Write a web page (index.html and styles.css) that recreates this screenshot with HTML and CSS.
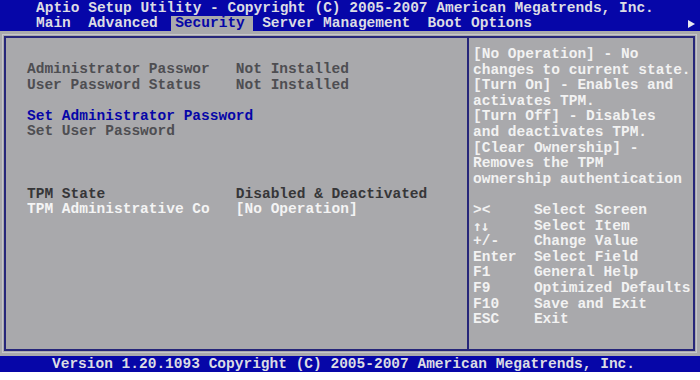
FILE: index.html
```html
<!DOCTYPE html>
<html lang="en">
<head>
    <meta charset="UTF-8">
    <meta name="viewport" content="width=device-width, initial-scale=1.0">
    <title>Aptio Setup Utility - Security</title>
    <link rel="stylesheet" href="styles.css">
</head>
<body>

<div class="screen">
    <header class="topbar">
        <div class="title">Aptio Setup Utility - Copyright (C) 2005-2007 American Megatrends, Inc.</div>
        <nav class="menu">
            <span class="tab">Main</span>
            <span class="tab">Advanced</span>
            <span class="tab active">Security</span>
            <span class="tab">Server Management</span>
            <span class="tab">Boot Options</span>
            <span class="more"></span>
        </nav>
    </header>

    <main class="frame">
        <section class="settings">
            <div class="row"><span class="label">Administrator Passwor</span><span>Not Installed</span></div>
            <div class="row"><span class="label">User Password Status</span><span>Not Installed</span></div>
            <div class="row blank"></div>
            <div class="row single selected">Set Administrator Password</div>
            <div class="row single">Set User Password</div>
            <div class="row blank"></div>
            <div class="row blank"></div>
            <div class="row blank"></div>
            <div class="row dark"><span class="label">TPM State</span><span>Disabled &amp; Deactivated</span></div>
            <div class="row editable"><span class="label">TPM Administrative Co</span><span>[No Operation]</span></div>
        </section>

        <aside class="help">
            <div class="help-text">
                <div>[No Operation] - No</div>
                <div>changes to current state.</div>
                <div>[Turn On] - Enables and</div>
                <div>activates TPM.</div>
                <div>[Turn Off] - Disables</div>
                <div>and deactivates TPM.</div>
                <div>[Clear Ownership] -</div>
                <div>Removes the TPM</div>
                <div>ownership authentication</div>
            </div>
            <div class="keys">
                <span>&gt;&lt;</span><span>Select Screen</span>
                <span class="arrows">&uarr;&darr;</span><span>Select Item</span>
                <span>+/-</span><span>Change Value</span>
                <span>Enter</span><span>Select Field</span>
                <span>F1</span><span>General Help</span>
                <span>F9</span><span>Optimized Defaults</span>
                <span>F10</span><span>Save and Exit</span>
                <span>ESC</span><span>Exit</span>
            </div>
        </aside>
    </main>

    <footer class="statusbar">Version 1.20.1093 Copyright (C) 2005-2007 American Megatrends, Inc.</footer>
</div>

</body>
</html>
```

FILE: styles.css
```css
body {
    margin: 0;
    padding: 0;
    background-color: #ffffff;
    font-family: "Liberation Mono", "DejaVu Sans Mono", monospace;
    font-size: 14.5px;
    font-weight: bold;
    line-height: 15.6px;
}
.screen {
    width: 700px;
    height: 372px;
    display: flex;
    flex-direction: column;
    background-color: #a9a9ac;
}
.topbar {
    height: 31px;
    background-color: #0606a8;
    color: #dcdce4;
    box-sizing: border-box;
    padding-top: 1px;
}
.title {
    padding-left: 36px;
    height: 15px;
    line-height: 15px;
}
.menu {
    display: flex;
    align-items: center;
    gap: 1ch;
    padding-left: calc(36px - 0.5ch);
    padding-right: 5px;
}
.tab {
    padding: 0 0.5ch;
}
.tab.active {
    background-color: #a9a9ac;
    color: #0606a8;
    padding-right: 1ch;
    margin-right: -0.5ch;
}
.more {
    margin-left: auto;
    width: 0;
    height: 0;
    border-top: 4px solid transparent;
    border-bottom: 4px solid transparent;
    border-left: 7px solid #e8e8f0;
}
.frame {
    flex: 1;
    margin: 5px 5px 5px 4px;
    border: 2px solid #26267a;
    outline: 1px solid #c6c6cc;
    outline-offset: 1px;
    display: grid;
    grid-template-columns: 461px 1fr;
}
.settings {
    padding: 24px 0 0 21px;
    color: #4e4e52;
}
.row {
    display: grid;
    grid-template-columns: 24ch auto;
    height: 15.6px;
    white-space: nowrap;
}
.row.single {
    display: block;
}
.row.selected {
    color: #0606a8;
}
.row.dark {
    color: #363638;
}
.row.editable {
    color: #f4f4f4;
}
.help {
    border-left: 2px solid #26267a;
    padding: 9px 0 0 4px;
    color: #f2f2f2;
}
.help-text {
    margin-bottom: 15.6px;
}
.keys {
    display: grid;
    grid-template-columns: 7ch auto;
}
.keys .arrows {
    font-family: "DejaVu Sans Mono", monospace;
    letter-spacing: -1px;
}
.statusbar {
    height: 16px;
    background-color: #0606a8;
    color: #dcdce4;
    padding-left: 52px;
    line-height: 16px;
}
```
